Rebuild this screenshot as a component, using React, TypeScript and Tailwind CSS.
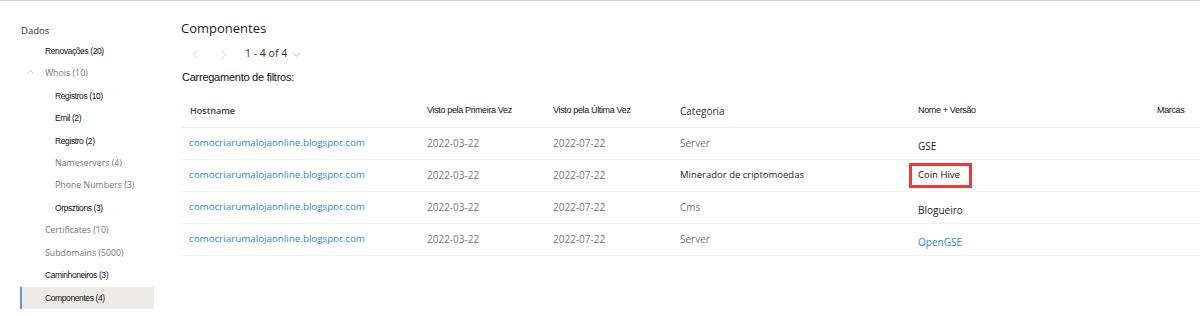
import React from 'react';

// --- Sidebar data ---
type NavItem = { label: string; indent: 0 | 1; tone: 'dark' | 'muted'; chevron?: boolean; active?: boolean };

const navItems: NavItem[] = [
  { label: 'Renovações (20)', indent: 0, tone: 'dark' },
  { label: 'Whois (10)', indent: 0, tone: 'muted', chevron: true },
  { label: 'Registros (10)', indent: 1, tone: 'dark' },
  { label: 'Emil (2)', indent: 1, tone: 'dark' },
  { label: 'Registro (2)', indent: 1, tone: 'dark' },
  { label: 'Nameservers (4)', indent: 1, tone: 'muted' },
  { label: 'Phone Numbers (3)', indent: 1, tone: 'muted' },
  { label: 'Orpsztions (3)', indent: 1, tone: 'dark' },
  { label: 'Certificates (10)', indent: 0, tone: 'muted' },
  { label: 'Subdomains (5000)', indent: 0, tone: 'muted' },
  { label: 'Caminhoneiros (3)', indent: 0, tone: 'dark' },
  { label: 'Componentes (4)', indent: 0, tone: 'dark', active: true },
];

// --- Table data ---
type Row = { host: string; first: string; last: string; category: string; catDark?: boolean; name: string; nameLink?: boolean; boxed?: boolean };

const rows: Row[] = [
  { host: 'comocriarumalojaonline.blogspot.com', first: '2022-03-22', last: '2022-07-22', category: 'Server', name: 'GSE' },
  { host: 'comocriarumalojaonline.blogspot.com', first: '2022-03-22', last: '2022-07-22', category: 'Minerador de criptomoedas', catDark: true, name: 'Coin Hive', boxed: true },
  { host: 'comocriarumalojaonline.blogspot.com', first: '2022-03-22', last: '2022-07-22', category: 'Cms', name: 'Blogueiro' },
  { host: 'comocriarumalojaonline.blogspot.com', first: '2022-03-22', last: '2022-07-22', category: 'Server', name: 'OpenGSE', nameLink: true },
];

const segoe = "font-['Open_Sans','Noto_Sans',sans-serif]";
const arial = "font-['Liberation_Sans',Arial,sans-serif]";

const Chevron = ({ dir, className }: { dir: 'left' | 'right' | 'up' | 'down'; className?: string }) => {
  const d = {
    left: 'M7 1 L1 7 L7 13',
    right: 'M1 1 L7 7 L1 13',
    up: 'M1 6 L6 1 L11 6',
    down: 'M1 1 L6 6 L11 1',
  }[dir];
  const box = dir === 'left' || dir === 'right' ? '0 0 8 14' : '0 0 12 7';
  return (
    <svg viewBox={box} className={className} fill="none" stroke="currentColor" strokeWidth="1">
      <path d={d} />
    </svg>
  );
};

const Sidebar = () => (
  <div className="w-[154px] shrink-0 pl-[20px] pt-[22px]">
    <div className={`${segoe} pl-px text-[9.5px] leading-[16px] text-[#323130] h-[16px]`}>Dados</div>
    <div className="mt-[1px]">
      {navItems.map((item) => (
        <div
          key={item.label}
          className={`relative flex h-[22.45px] items-center ${item.active ? 'bg-[#edebe9]' : ''} ${item.indent ? 'pl-[35px]' : 'pl-[25px]'}`}
        >
          {item.active && <div className="absolute left-0 top-0 h-full w-[2px] bg-[#5a9be0]" />}
          {item.chevron && <Chevron dir="up" className="absolute left-[6px] top-[8px] h-[5px] w-[9px] text-[#a19f9d]" />}
          {item.tone === 'dark' ? (
            <span className={`${arial} text-[8.5px] tracking-[-0.4px] text-[#111]`}>{item.label}</span>
          ) : (
            <span className={`${segoe} text-[8.8px] text-[#797775]`}>{item.label}</span>
          )}
        </div>
      ))}
    </div>
  </div>
);

const cols = 'grid grid-cols-[246px_126px_127px_238px_239px_1fr]';
const headDark = `${arial} text-[9px] tracking-[-0.35px] text-[#111]`;

const Table = () => (
  <div className="mt-[10px]">
    <div className={`${cols} h-[33px] items-center border-b border-[#edebe9]`}>
      <div className={`${segoe} pl-[9px] text-[9px] font-semibold text-[#3b3a39]`}>Hostname</div>
      <div className={headDark}>Visto pela Primeira Vez</div>
      <div className={headDark}>Visto pela Última Vez</div>
      <div className={`${segoe} text-[10px] text-[#323130]`}>Categoria</div>
      <div className={headDark}>Nome + Versão</div>
      <div className={headDark}>Marcas</div>
    </div>
    {rows.map((r, i) => (
      <div key={i} className={`${cols} h-[32px] items-center border-b border-[#f3f2f1]`}>
        <div className={`${segoe} pl-[8px] text-[9.8px] text-[#2b88d8]`}>{r.host}</div>
        <div className={`${segoe} text-[10px] text-[#797775]`}>{r.first}</div>
        <div className={`${segoe} text-[10px] text-[#797775]`}>{r.last}</div>
        <div className={`${segoe} ${r.catDark ? 'text-[9.5px] text-[#201f1e]' : 'text-[10px] text-[#797775]'}`}>{r.category}</div>
        <div>
          {r.boxed ? (
            <span className={`${segoe} -ml-[9px] flex h-[25px] w-fit items-center border-[3px] border-[#ea3a40] pl-[6px] pr-[9px] text-[9.5px] text-[#111]`}>
              {r.name}
            </span>
          ) : (
            <span className={`${segoe} text-[10px] ${r.nameLink ? 'text-[#2b88d8]' : 'text-[#201f1e]'}`}>{r.name}</span>
          )}
        </div>
        <div />
      </div>
    ))}
  </div>
);

export default function App() {
  return (
    <div className="h-[316px] w-[1200px] overflow-hidden border-t border-[#d2d0ce] bg-white">
      <div className="flex">
        <Sidebar />
        <div className="ml-[27px] flex-1 pt-[17px]">
          <h1 className={`${segoe} text-[13px] leading-[20px] text-[#201f1e]`}>Componentes</h1>
          <div className="mt-[6px] flex h-[20px] items-center">
            <Chevron dir="left" className="ml-[11px] h-[11px] w-[7px] text-[#c8c6c4]" />
            <Chevron dir="right" className="ml-[21px] h-[11px] w-[7px] text-[#c8c6c4]" />
            <span className={`${segoe} ml-[18px] text-[10.5px] text-[#323130]`}>1 - 4 of 4</span>
            <Chevron dir="down" className="ml-[5px] h-[5px] w-[9px] text-[#a19f9d]" />
          </div>
          <div className={`${arial} mt-[5px] h-[16px] pl-[1px] text-[11px] leading-[16px] tracking-[-0.25px] text-[#111]`}>
            Carregamento de filtros:
          </div>
          <Table />
        </div>
      </div>
    </div>
  );
}
